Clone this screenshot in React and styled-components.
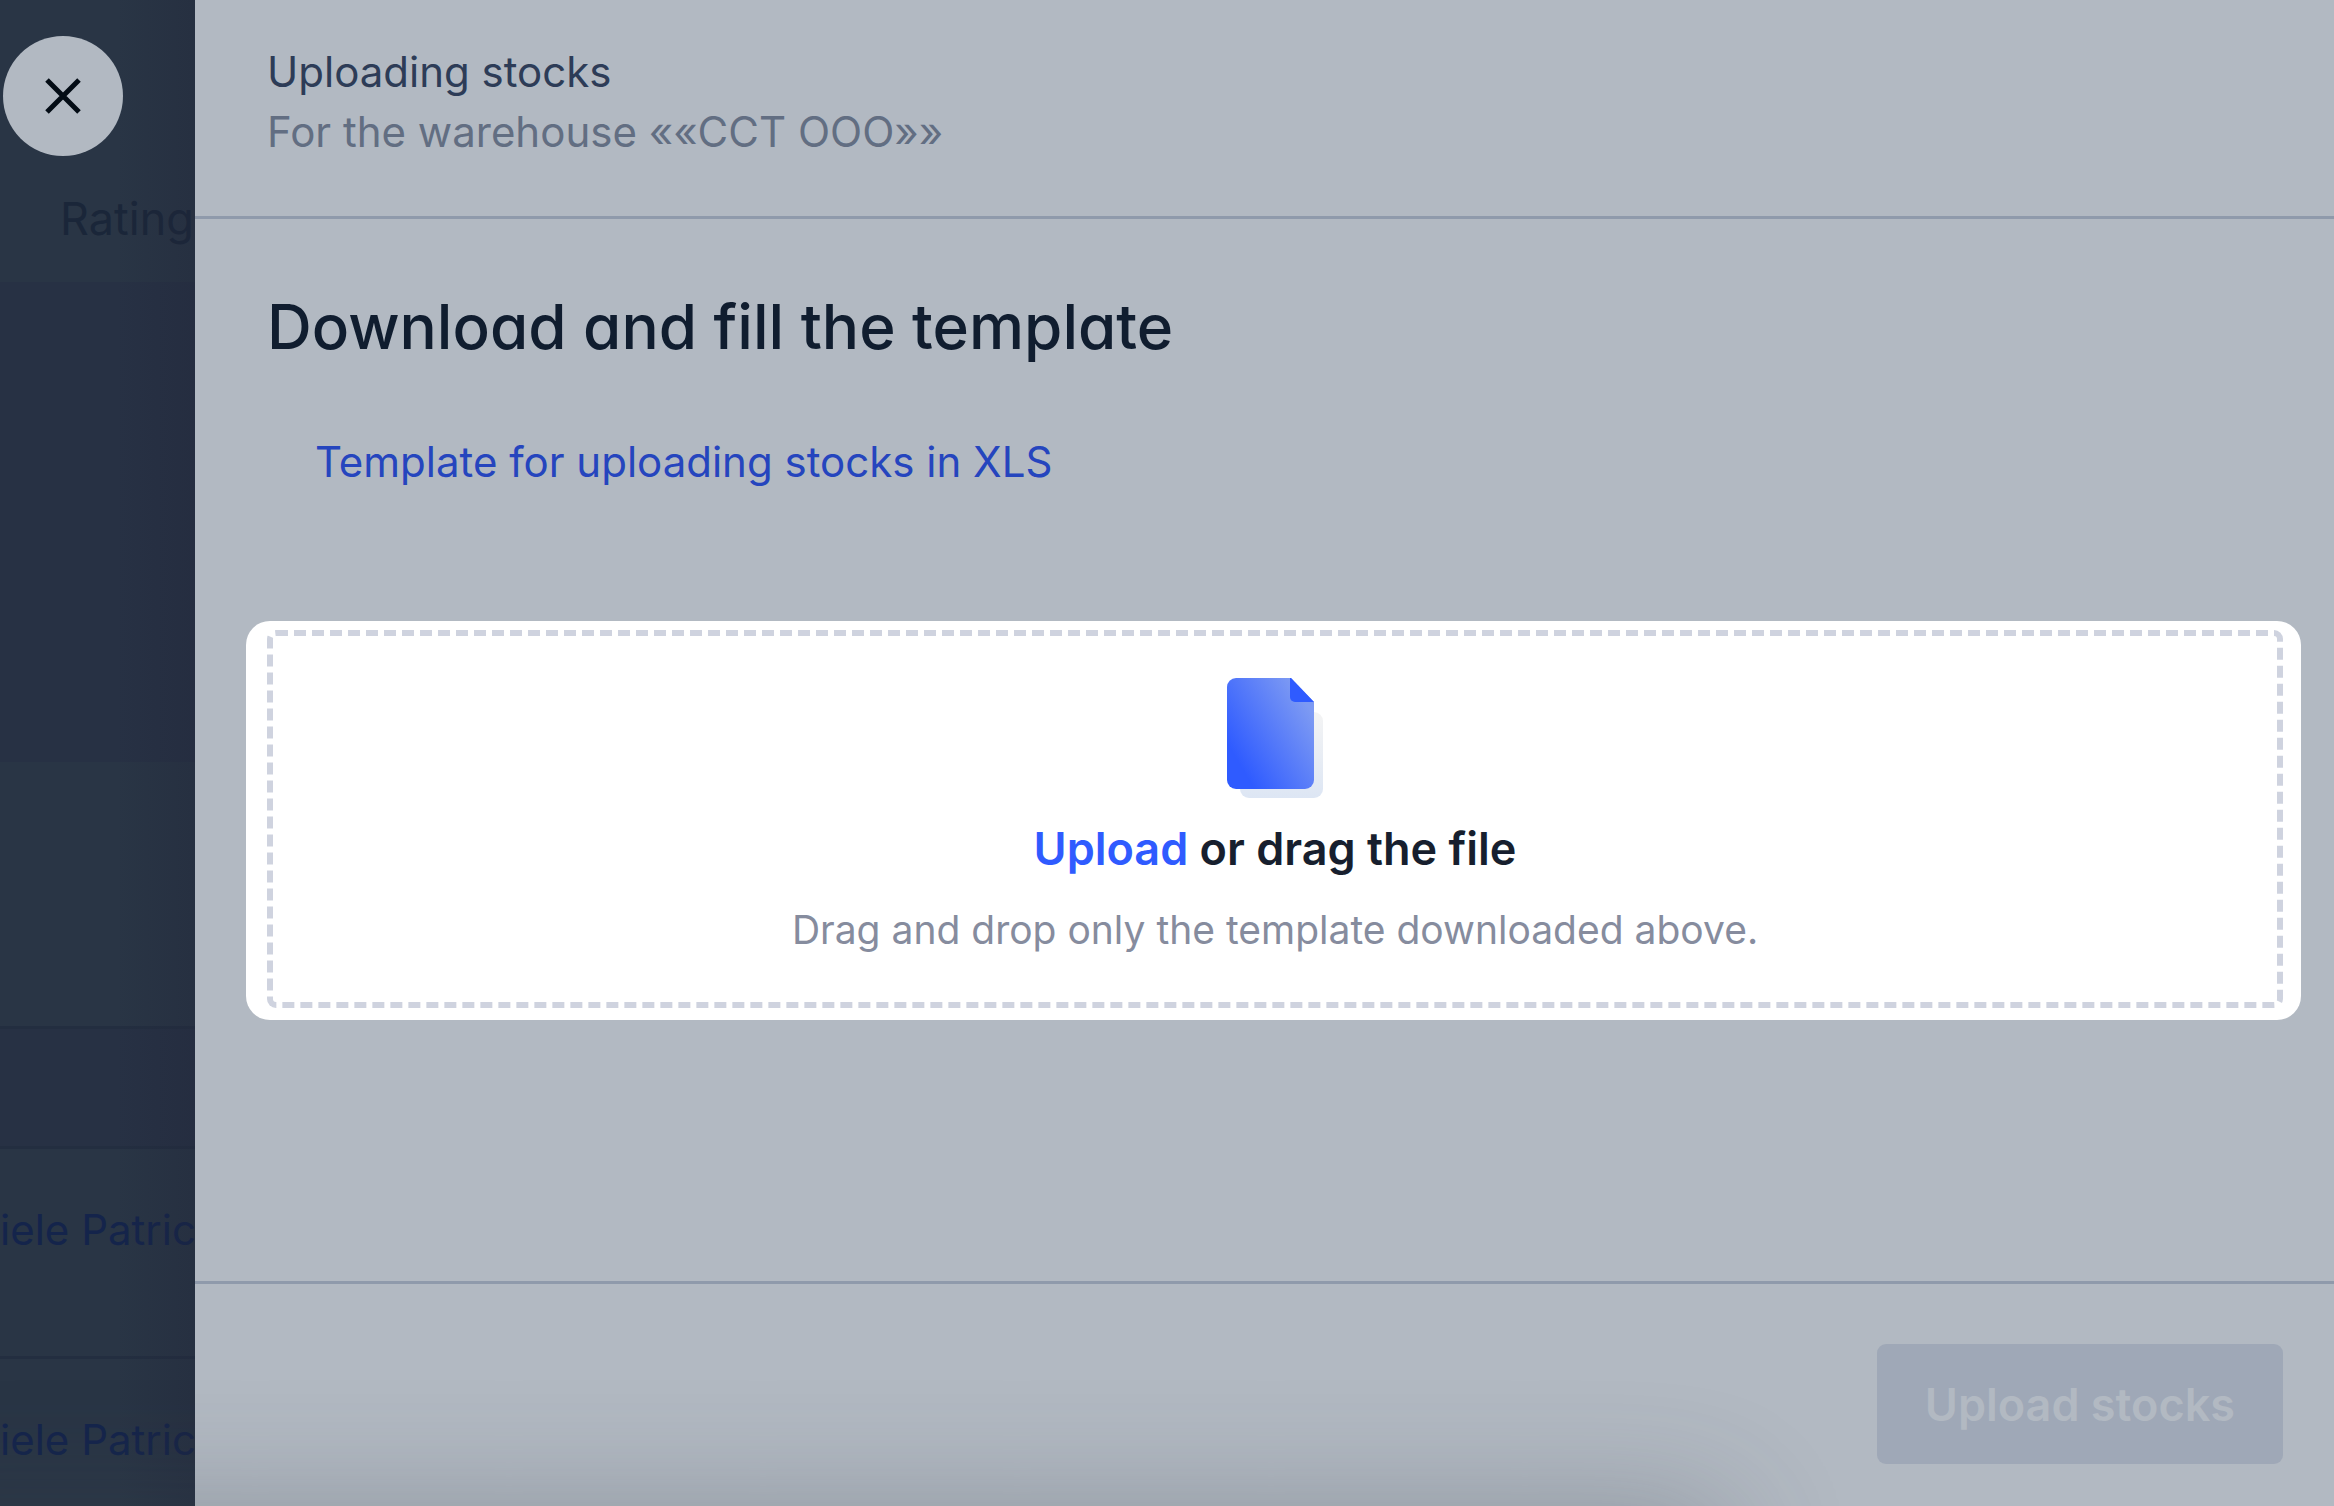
import React from "react";
import styled, { createGlobalStyle } from "styled-components";

const GlobalStyle = createGlobalStyle`
  *, *::before, *::after { box-sizing: border-box; }
  body { margin: 0; background: #b2b9c2; }
  body, button { font-family: Inter, "Liberation Sans", sans-serif; }
  h1, h2, p { margin: 0; }
`;

const Screen = styled.div`
  position: relative;
  display: grid;
  grid-template-columns: 195px minmax(0, 1fr);
  min-height: 100vh;
  overflow: hidden;
`;

const Backdrop = styled.aside`
  position: relative;
  display: flex;
  flex-direction: column;
  overflow: hidden;
  white-space: nowrap;
  background: #293545;

  &::after {
    content: "";
    position: absolute;
    inset: 0;
    background: linear-gradient(90deg, transparent 60%, rgba(33, 38, 57, 0.35));
    pointer-events: none;
  }
`;

const CloseButton = styled.button`
  position: absolute;
  top: 36px;
  left: 3px;
  z-index: 1;
  display: grid;
  place-items: center;
  width: 120px;
  height: 120px;
  padding: 0;
  border: 0;
  border-radius: 50%;
  background: #b2b9c2;
  color: #030c15;
`;

const NavBar = styled.div`
  display: flex;
  align-items: flex-end;
  height: 282px;
  padding: 0 0 30px 60px;
  font-size: 45px;
  line-height: 66px;
  color: #1a2639;
`;

const Band = styled.div`
  height: ${(p) => p.$height}px;
  background: ${(p) => (p.$tinted ? "#273144" : "transparent")};
  border-bottom: ${(p) => (p.$line ? "3px solid #232e40" : "0")};
`;

const BackRow = styled.div`
  padding: 51px 0 96px;
  border-bottom: 3px solid #232e40;
  font-size: 42px;
  line-height: 60px;
  color: #14244b;

  &:last-child {
    flex: 1;
    padding-bottom: 0;
    border-bottom: 0;
  }
`;

const Panel = styled.main`
  display: flex;
  flex-direction: column;
  background: #b2b9c2;
`;

const Header = styled.header`
  padding: 42px 72px 54px;
  border-bottom: 3px solid #8f9aab;
  font-size: 42px;
  line-height: 60px;
`;

const Title = styled.h1`
  font: inherit;
  color: #2d3c57;
`;

const Subtitle = styled.p`
  color: #626e82;
`;

const Content = styled.section`
  display: flex;
  flex-direction: column;
  flex: 1;
  align-items: flex-start;
  padding: 66px 33px 60px 51px;
`;

const Heading = styled.h2`
  padding-left: 21px;
  font-size: 62px;
  font-weight: 500;
  line-height: 84px;
  font-feature-settings: "cv11";
  color: #101d2f;
`;

const TemplateLink = styled.a`
  margin: 63px 0 129px 69px;
  font-size: 42px;
  line-height: 60px;
  color: #2545be;
  text-decoration: none;
`;

const Highlight = styled.div`
  align-self: stretch;
  padding: 9px 18px 12px 21px;
  border-radius: 24px;
  background: #fff;
`;

const DropZone = styled.div`
  display: flex;
  flex-direction: column;
  align-items: center;
  padding: 42px 24px 45px;
  border: 6px dashed #cfd3df;
  border-radius: 9px;
  text-align: center;
`;

const DropTitle = styled.p`
  margin-top: 18px;
  font-size: 45px;
  font-weight: 600;
  line-height: 66px;
  color: #171f2e;
`;

const UploadLink = styled.button`
  padding: 0;
  border: 0;
  background: none;
  font: inherit;
  color: #2f5bff;
`;

const DropHint = styled.p`
  margin-top: 21px;
  font-size: 39px;
  line-height: 54px;
  color: #868c9e;
`;

const Footer = styled.footer`
  display: flex;
  justify-content: flex-end;
  padding: 60px 51px 42px;
  border-top: 3px solid #8f9aab;
`;

const SubmitButton = styled.button`
  height: 120px;
  padding: 0 48px;
  border: 0;
  border-radius: 9px;
  background: #9fa8b7;
  color: #b2b9c2;
  font-size: 45px;
  font-weight: 600;
`;

const BottomShade = styled.div`
  position: absolute;
  top: 100%;
  left: -200px;
  right: 26%;
  height: 300px;
  border-radius: 24px;
  box-shadow: 0 0 120px rgba(60, 70, 80, 0.3);
  pointer-events: none;
`;

const CloseIcon = () => (
  <svg width="36" height="36" viewBox="0 0 36 36" fill="none" aria-hidden="true">
    <path d="M2 2 34 34M34 2 2 34" stroke="currentColor" strokeWidth="5" />
  </svg>
);

const FileIcon = () => (
  <svg width="96" height="120" viewBox="0 0 96 120" aria-hidden="true">
    <defs>
      <linearGradient id="sheet" x1="12" y1="85" x2="88" y2="40" gradientUnits="userSpaceOnUse">
        <stop offset="0" stopColor="#2f5bff" />
        <stop offset="1" stopColor="#7d9af3" />
      </linearGradient>
      <linearGradient id="under" x1="0" y1="0" x2="0" y2="1">
        <stop offset="0" stopColor="#f4f4f4" />
        <stop offset="1" stopColor="#dde6f4" />
      </linearGradient>
    </defs>
    <rect x="13" y="34" width="83" height="86" rx="9" fill="url(#under)" />
    <path
      d="M9 0H64L87 24V102a9 9 0 0 1-9 9H9a9 9 0 0 1-9-9V9a9 9 0 0 1 9-9Z"
      fill="url(#sheet)"
    />
    <path d="M64 0 87 24H68a5 5 0 0 1-5-5V0Z" fill="#2f5bff" />
  </svg>
);

export default function App() {
  return (
    <>
      <GlobalStyle />
      <Screen>
        <Backdrop>
          <NavBar>Rating</NavBar>
          <Band $height={480} $tinted />
          <Band $height={267} $line />
          <Band $height={120} $tinted $line />
          <BackRow>iele Patric</BackRow>
          <BackRow>iele Patric</BackRow>
        </Backdrop>
        <CloseButton type="button" aria-label="Close">
          <CloseIcon />
        </CloseButton>
        <Panel>
          <Header>
            <Title>Uploading stocks</Title>
            <Subtitle>For the warehouse ««CCT OOO»»</Subtitle>
          </Header>
          <Content>
            <Heading>Download and fill the template</Heading>
            <TemplateLink href="#template">Template for uploading stocks in XLS</TemplateLink>
            <Highlight>
              <DropZone>
                <FileIcon />
                <DropTitle>
                  <UploadLink type="button">Upload</UploadLink> or drag the file
                </DropTitle>
                <DropHint>Drag and drop only the template downloaded above.</DropHint>
              </DropZone>
            </Highlight>
          </Content>
          <Footer>
            <SubmitButton type="button" disabled>
              Upload stocks
            </SubmitButton>
          </Footer>
        </Panel>
        <BottomShade />
      </Screen>
    </>
  );
}
